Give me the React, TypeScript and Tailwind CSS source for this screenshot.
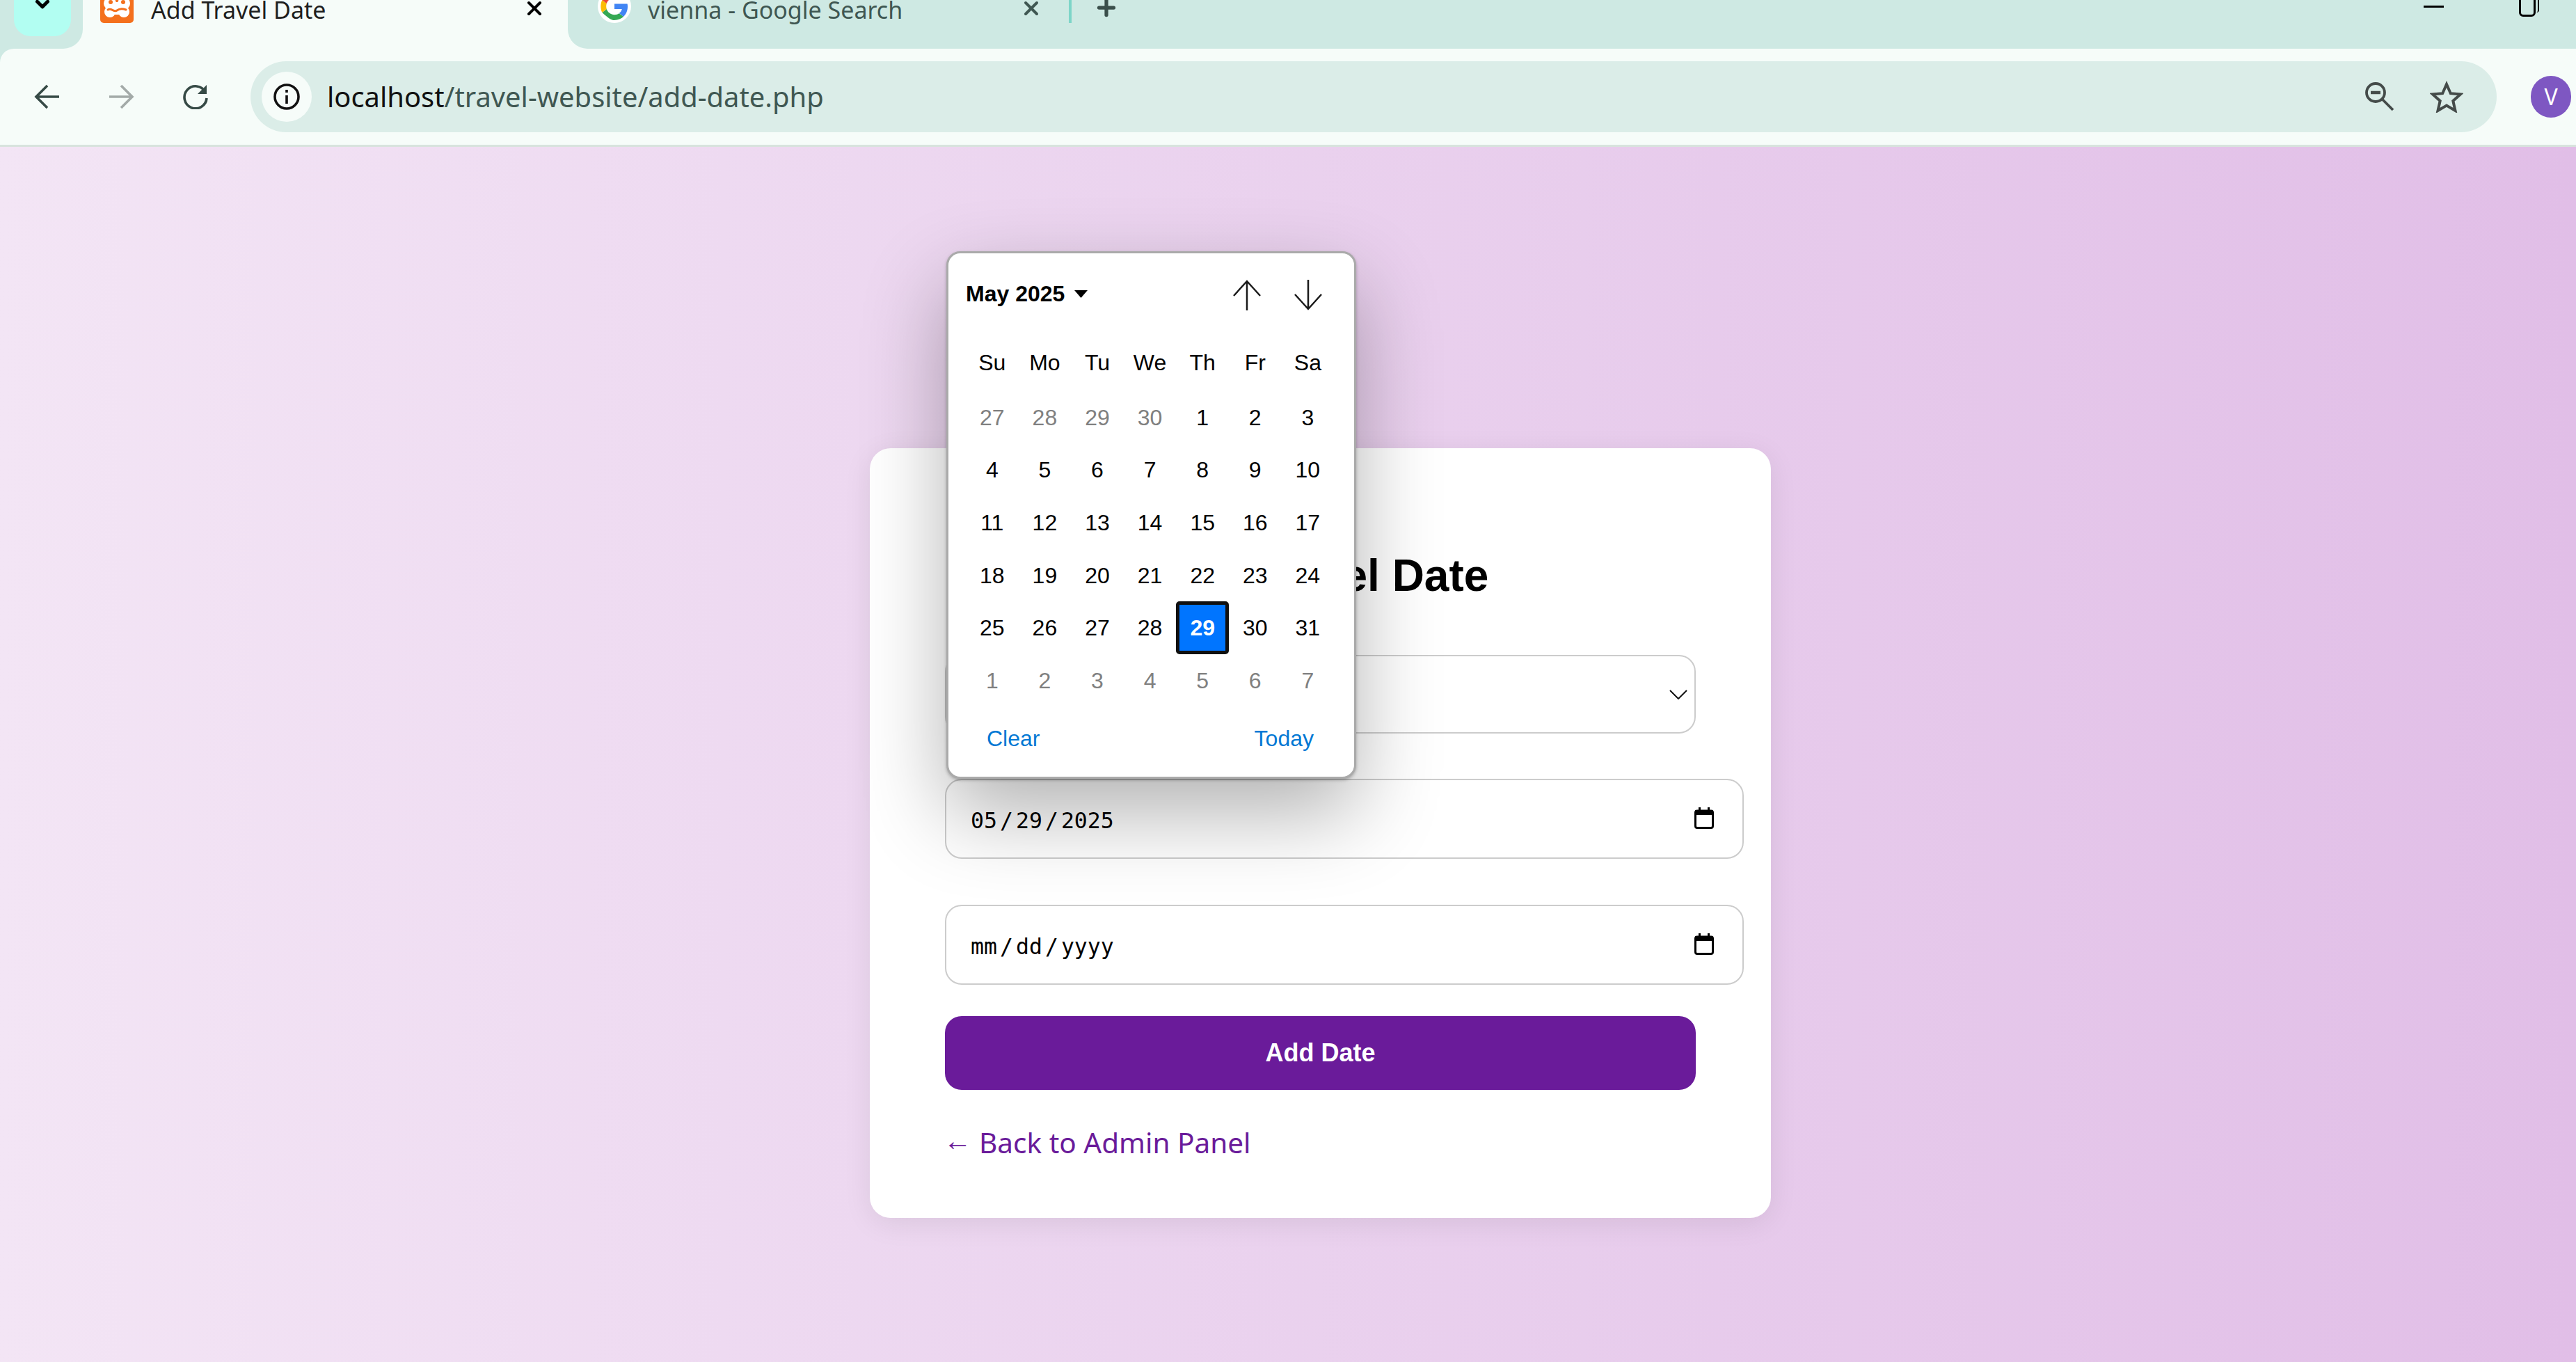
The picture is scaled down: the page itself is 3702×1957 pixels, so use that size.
import { ChevronDown, Plus, X } from 'lucide-react';

const sans = "font-['Noto_Sans',sans-serif]";

const weekdays = ['Su', 'Mo', 'Tu', 'We', 'Th', 'Fr', 'Sa'];

const days: { n: number; muted?: boolean; selected?: boolean }[] = [
  ...[27, 28, 29, 30].map((n) => ({ n, muted: true })),
  ...Array.from({ length: 31 }, (_, i) => ({ n: i + 1, selected: i + 1 === 29 })),
  ...[1, 2, 3, 4, 5, 6, 7].map((n) => ({ n, muted: true })),
];

function GoogleIcon() {
  return (
    <svg viewBox="0 0 48 48" className="w-[48px] h-[48px]">
      <circle cx="24" cy="24" r="24" fill="#fff" />
      <path fill="#4285F4" d="M43 24.500c0-1.400-.1-2.700-.4-4H24v7.600h10.800c-.5 2.500-1.900 4.600-4 6l6.200 4.800C40.700 35.500 43 30.500 43 24.500z" />
      <path fill="#34A853" d="M24 44c5.300 0 9.700-1.800 13-4.900l-6.200-4.800c-1.800 1.200-4 1.900-6.800 1.900-5.200 0-9.600-3.500-11.200-8.200l-6.400 5C15.700 41.500 19.500 44 24 44z" />
      <path fill="#FBBC05" d="M12.800 28c-.8-2.500-.8-5.400 0-8l-6.400-5c-2.700 5.400-2.700 12.600 0 18z" />
      <path fill="#EA4335" d="M24 11.800c2.900 0 5.500 1 7.500 2.900l5.600-5.600C33.700 6 29.300 4 24 4 16.500 4 10 8.300 6.400 15l6.400 5c1.600-4.700 6-8.200 11.200-8.200z" />
    </svg>
  );
}

function XamppIcon() {
  return (
    <svg viewBox="0 0 48 48" className="w-[48px] h-[48px]">
      <rect width="48" height="48" rx="5" fill="#f4701d" />
      {/* white bone shape */}
      <circle cx="14" cy="20" r="9" fill="#fff" />
      <circle cx="34" cy="20" r="9" fill="#fff" />
      <circle cx="14" cy="32" r="8" fill="#fff" />
      <circle cx="34" cy="32" r="8" fill="#fff" />
      <rect x="12" y="18" width="24" height="18" fill="#fff" />
      <circle cx="15" cy="18" r="3" fill="#f4701d" />
      <circle cx="33" cy="18" r="3" fill="#f4701d" />
      <path d="M11 29c5-3 9 4 13 1s8-3 13-1" fill="none" stroke="#f4701d" strokeWidth="3" strokeLinecap="round" />
    </svg>
  );
}

function CalendarIcon() {
  return (
    <svg viewBox="0 0 28 31" className="w-[28px] h-[31px] mt-[-3px]">
      <rect x="1.500" y="5" width="25" height="24.500" rx="2.500" fill="none" stroke="#000" strokeWidth="3" />
      <rect x="1" y="4" width="26" height="7" fill="#000" />
      <rect x="6" y="0" width="3" height="6" fill="#000" />
      <rect x="19" y="0" width="3" height="6" fill="#000" />
    </svg>
  );
}

function DateField({ parts }: { parts: string[] }) {
  return (
    <div className="w-[1148px] h-[115px] shrink-0 rounded-[24px] border-[2px] border-[#cccccc] pl-[35px] pr-[41px] flex items-center justify-between">
      <div className="flex items-center pt-[6px] font-['DejaVu_Sans_Mono',monospace] text-[31.500px] text-black">
        {parts.map((p, i) => (
          <span key={i} className="flex items-center">
            {i > 0 && <span className="w-[27px] text-center">/</span>}
            {p}
          </span>
        ))}
      </div>
      <CalendarIcon />
    </div>
  );
}

function DatePicker() {
  return (
    <div className="absolute left-[1360px] top-[361px] w-[589px] h-[758px] rounded-[20px] border-[3px] border-[#aaaaaa] bg-white pl-[25px] font-['Liberation_Sans',sans-serif] shadow-[0_50px_120px_rgba(0,0,0,0.3),0_2px_4px_rgba(0,0,0,0.25)]">
      <div className="h-[84px] mt-[16px] mb-[19px] flex items-center">
        <span className="text-[32px] font-bold text-black leading-none">May 2025</span>
        <svg viewBox="0 0 19 11" className="w-[19px] h-[11px] ml-[14px]">
          <path d="M0 0h19L9.500 11z" fill="#000" />
        </svg>
        <svg viewBox="0 0 40 44" className="w-[40px] h-[44px] ml-[209px] mt-[3px]" fill="none" stroke="#1a1a1a" strokeWidth="2.500">
          <path d="M20 44V2M1 23L20 2l19 21" />
        </svg>
        <svg viewBox="0 0 40 44" className="w-[40px] h-[44px] ml-[48px] mt-[3px]" fill="none" stroke="#1a1a1a" strokeWidth="2.500">
          <path d="M20 0v42M1 21l19 21 19-21" />
        </svg>
      </div>

      <div className="grid grid-cols-[repeat(7,75.600px)] h-[76px] mb-[3px] items-center text-center text-[32px] text-black">
        {weekdays.map((d) => (
          <span key={d}>{d}</span>
        ))}
      </div>

      <div className="grid grid-cols-[repeat(7,75.600px)] auto-rows-[75.600px] text-[32px]">
        {days.map((d, i) =>
          d.selected ? (
            <div key={i} className="flex items-center justify-center rounded-[5px] border-[5px] border-[#101010] bg-[#0075ff] font-bold text-white">
              {d.n}
            </div>
          ) : (
            <div key={i} className={`flex items-center justify-center ${d.muted ? 'text-[#808080]' : 'text-black'}`}>
              {d.n}
            </div>
          ),
        )}
      </div>

      <div className="mt-[15px] h-[60px] flex items-center justify-between pl-[30px] pr-[58px] text-[32px] text-[#0078d4]">
        <span>Clear</span>
        <span>Today</span>
      </div>
    </div>
  );
}

export default function App() {
  return (
    <div className={`relative w-[3702px] h-[1957px] overflow-hidden flex flex-col bg-[#cee9e3] ${sans}`}>
      {/* tab strip, the toolbar colour shows through behind the active tab */}
      <div className="h-[70px] shrink-0 bg-[#f6fcf9] flex items-start overflow-hidden">
        <div className="w-[119px] h-[70px] shrink-0 rounded-br-[28px] bg-[#cee9e3] pl-[20px]">
          <div className="w-[82px] h-[52px] rounded-b-[24px] bg-[#b2fef2] flex justify-center text-black">
            <ChevronDown size={30} strokeWidth={4} className="mt-[-9px]" />
          </div>
        </div>
        <div className="w-[697px] h-[70px] shrink-0 flex items-start pl-[25px]">
          <div className="mt-[-15px]">
            <XamppIcon />
          </div>
          <span className="ml-[25px] mt-[-10px] text-[34px] leading-[48px] text-[#1f1f1f]">Add Travel Date</span>
          <X size={32} strokeWidth={3} className="ml-[284px] mt-[-4px] text-black" />
        </div>
        <div className="grow h-[70px] rounded-bl-[28px] bg-[#cee9e3] flex items-start pl-[43px]">
          <div className="mt-[-15px]">
            <GoogleIcon />
          </div>
          <span className="ml-[24px] mt-[-10px] text-[34px] leading-[48px] text-[#3f5752]">vienna - Google Search</span>
          <X size={32} strokeWidth={3} className="ml-[169px] mt-[-4px] text-[#3f5752]" />
          <div className="ml-[38px] w-[4px] h-[33px] bg-[#7dd5c8]" />
          <Plus size={36} strokeWidth={3.500} className="ml-[32px] mt-[-7px] text-[#3a4f4b]" />
          <div className="ml-[1875px] mt-[8px] w-[29px] h-[3px] bg-black" />
          <div className="ml-[108px] mt-[-8px] w-[24px] h-[32px] rounded-[6px] border-[3px] border-black" />
          <div className="ml-[1px] mt-[-8px] w-[4px] h-[26px] rounded-r-full border-r-[2px] border-black" />
        </div>
      </div>

      {/* toolbar */}
      <div className="h-[141px] shrink-0 bg-[#f6fcf9] border-b-[3px] border-[#d8e3dd] flex items-center rounded-tl-[20px]">
        <svg viewBox="0 0 36 36" className="ml-[49px] w-[36px] h-[36px]" fill="none" stroke="#364a46" strokeWidth="3.600">
          <path d="M36 18H4M19 2L3 18l16 16" />
        </svg>
        <svg viewBox="0 0 36 36" className="ml-[72px] w-[36px] h-[36px]" fill="none" stroke="#a3aaa8" strokeWidth="3.600">
          <path d="M0 18h32M17 2l16 16-16 16" />
        </svg>
        <svg viewBox="0 0 38 36" className="ml-[69px] w-[38px] h-[36px]" fill="none" stroke="#364a46" strokeWidth="3.600">
          <path d="M33 11A16 16 0 1 0 35 20" />
          <path d="M35 1v13H22" fill="#364a46" stroke="none" />
        </svg>
        <div className="ml-[60px] grow h-[102px] rounded-full bg-[#dbede8] flex items-center pl-[16px] pr-[48px]">
          <div className="w-[72px] h-[72px] rounded-full bg-[#f6fcf9] flex items-center justify-center shrink-0">
            <svg viewBox="0 0 40 40" className="w-[40px] h-[40px]" fill="none" stroke="#111" strokeWidth="3.600">
              <circle cx="20" cy="20" r="17" />
              <path d="M20 18v12M20 10v4" />
            </svg>
          </div>
          <span className="ml-[22px] text-[39.900px] leading-none text-[#3f5752]">
            <span className="text-[#111]">localhost</span>/travel-website/add-date.php
          </span>
          <svg viewBox="0 0 42 42" className="ml-auto w-[42px] h-[42px]" fill="none" stroke="#444b49" strokeWidth="3.800">
            <circle cx="15" cy="15" r="13" />
            <path d="M25 25l15 15" />
            <path d="M8 15h14" strokeWidth="4.500" />
          </svg>
          <svg viewBox="0 0 48 46" className="ml-[51px] w-[48px] h-[46px]" fill="none" stroke="#444b49" strokeWidth="4">
            <path d="M24 5l5.800 13.200 14.200 1.300-10.700 9.500 3.200 14L24 35.600 11.500 43l3.200-14L4 19.500l14.200-1.300z" />
          </svg>
        </div>
        <div className="ml-[49px] mr-[7px] w-[58px] h-[60px] rounded-full bg-[#7e57c2] flex items-center justify-center text-[32px] text-white">
          V
        </div>
      </div>

      {/* page */}
      <main className="grow bg-linear-to-r from-[#f3e5f5] to-[#e1bee7] overflow-hidden">
        <div className="ml-[1250px] mt-[433px] w-[1295px] h-[1106px] rounded-[30px] bg-white px-[108px] pt-[136px] shadow-[0_8px_40px_rgba(0,0,0,0.08)]">
          <h2 className="h-[94px] text-center font-['Liberation_Sans',sans-serif] text-[64px] leading-[94px] font-bold text-black">
            Add Travel Date
          </h2>

          <div className="mt-[67px] w-[1079px] h-[113px] rounded-[24px] border-[2px] border-[#cccccc] flex items-center justify-end pr-[10px]">
            <svg viewBox="0 0 26 14" className="w-[26px] h-[14px]" fill="none" stroke="#111" strokeWidth="2">
              <path d="M1 1l12 12L25 1" />
            </svg>
          </div>

          <div className="mt-[65px]">
            <DateField parts={['05', '29', '2025']} />
          </div>
          <div className="mt-[66px]">
            <DateField parts={['mm', 'dd', 'yyyy']} />
          </div>

          <button className="mt-[45px] w-[1079px] h-[106px] rounded-[24px] bg-[#6a1b9a] font-['Liberation_Sans',sans-serif] text-[36px] font-bold text-white">
            Add Date
          </button>

          <a className="mt-[42px] ml-[-2px] block h-[60px] text-[40.500px] leading-[60px] text-[#6a1b9a]">
            <span className="align-[4px]">←</span> Back to Admin Panel
          </a>
        </div>
      </main>

      <DatePicker />
    </div>
  );
}
